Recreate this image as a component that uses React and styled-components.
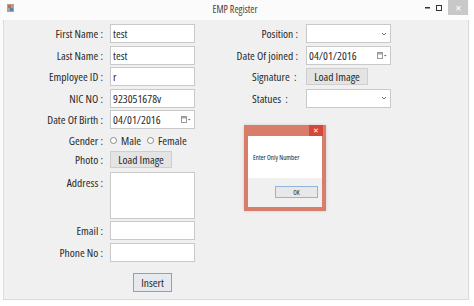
import styled, { createGlobalStyle } from 'styled-components';

const Global = createGlobalStyle`
  html, body { margin: 0; padding: 0; background: #ffffff; }
  body {
    font-family: "Open Sans", "Noto Sans", sans-serif;
    font-stretch: 85%;
  }
`;

const Window = styled.div`
  width: 470px;
  height: 301px;
  background: #fbfbfb;
  display: flex;
  flex-direction: column;
  box-sizing: border-box;
`;

const TitleBar = styled.div`
  height: 20px;
  display: flex;
  align-items: flex-start;
  position: relative;
`;

const AppIcon = styled.svg`
  margin: 4px 0 0 7px;
`;

const Title = styled.div`
  position: absolute;
  left: 0;
  right: 0;
  top: 2px;
  text-align: center;
  font-size: 10px;
  color: #444;
`;

const Controls = styled.div`
  margin-left: auto;
  display: flex;
  align-items: flex-start;
  height: 15px;
  margin-right: 2px;
`;

const Ctrl = styled.div`
  width: 11px;
  height: 15px;
  display: flex;
  align-items: center;
  justify-content: center;
`;

const Close = styled.div`
  width: 20px;
  height: 15px;
  background: #c8c8c8;
  color: #fff;
  font-size: 8px;
  display: flex;
  align-items: center;
  justify-content: center;
  margin-left: 4px;
`;

const Body = styled.div`
  flex: 1;
  margin: 0 1px 1px 3px;
  background: #f0f0f0;
  border: 1px solid #dcdcdc;
  border-top: none;
  position: relative;
  display: flex;
  box-sizing: border-box;
`;

const Form = styled.div`
  display: grid;
  grid-template-columns: ${p => p.$label}px ${p => p.$field}px;
  grid-template-rows: ${p => p.$rows};
  column-gap: ${p => p.$gap}px;
  row-gap: 2.5px;
  padding-top: 4px;
  margin-left: ${p => p.$offset || 0}px;
  align-content: start;
`;

const Label = styled.div`
  font-size: 11.5px;
  color: #2a2a2a;
  display: flex;
  align-items: ${p => (p.$top ? 'flex-start' : 'center')};
  justify-content: ${p => (p.$left ? 'flex-start' : 'flex-end')};
  padding-top: ${p => (p.$top ? 5 : 0)}px;
  padding-left: ${p => p.$indent || 0}px;
  white-space: pre;
`;

const Field = styled.div`
  display: flex;
  align-items: ${p => (p.$bottom ? 'flex-end' : 'center')};
`;

const Input = styled.div`
  box-sizing: border-box;
  width: 85px;
  height: ${p => p.$h || 19}px;
  background: #fff;
  border: 1px solid #c9c9c9;
  font-size: 11.5px;
  color: #2a2a2a;
  padding: 0 3px 0 2px;
  display: flex;
  align-items: ${p => (p.$multi ? 'flex-start' : 'center')};
  justify-content: space-between;
`;

const Button = styled.div`
  box-sizing: border-box;
  height: 17px;
  width: ${p => p.$w}px;
  background: #e4e4e4;
  border: 1px solid #cfcfcf;
  font-size: 11.5px;
  color: #2a2a2a;
  display: flex;
  align-items: center;
  justify-content: center;
`;

const InsertBtn = styled(Button)`
  height: 19px;
  border-color: #7fa6c9;
  background: #e6e9ee;
  margin: 11px 0 0 129px;
`;

const Radio = styled.span`
  display: inline-flex;
  align-items: center;
  font-size: 11.5px;
  color: #2a2a2a;
  margin-right: 6px;
  &::before {
    content: '';
    width: 5px;
    height: 5px;
    border: 1px solid #8a8a8a;
    border-radius: 50%;
    margin-right: 4px;
    background: #fff;
  }
`;

const LeftCol = styled.div`
  display: flex;
  flex-direction: column;
`;

const Dialog = styled.div`
  position: absolute;
  left: 240px;
  top: 105px;
  width: 82px;
  height: 86px;
  background: #d97d6b;
  box-sizing: border-box;
  padding: 0 4px 4px 4px;
  display: flex;
  flex-direction: column;
  box-shadow: 0 0 3px rgba(0,0,0,0.15);
`;

const DialogTitle = styled.div`
  height: 11px;
  display: flex;
  justify-content: flex-end;
`;

const DialogClose = styled.div`
  width: 14px;
  height: 11px;
  background: #d5473a;
  color: #fff;
  font-size: 7px;
  display: flex;
  align-items: center;
  justify-content: center;
  margin-right: -1px;
`;

const DialogBody = styled.div`
  height: 42px;
  background: #fff;
  font-size: 7px;
  color: #222;
  display: flex;
  align-items: center;
  padding-left: 5px;
`;

const DialogFoot = styled.div`
  flex: 1;
  background: #f0f0f0;
  display: flex;
  justify-content: flex-end;
  padding: 8px 4px 0 0;
`;

const OkBtn = styled.div`
  box-sizing: border-box;
  width: 43px;
  height: 12px;
  background: #e8e8e8;
  border: 1px solid #8fb5dc;
  font-size: 6.5px;
  color: #222;
  display: flex;
  align-items: center;
  justify-content: center;
`;

const DateIcon = () => (
  <svg width="10" height="7" viewBox="0 0 10 7">
    <rect x="0.5" y="0.5" width="5" height="6" fill="#fff" stroke="#999" />
    <rect x="1" y="1" width="4" height="1.5" fill="#aaa" />
    <path d="M7 3 L9.5 3 L8.25 4.5 Z" fill="#666" />
  </svg>
);

const Chevron = () => (
  <svg width="6" height="4" viewBox="0 0 6 4">
    <path d="M1 1 L3 3 L5 1" fill="none" stroke="#777" strokeWidth="1" />
  </svg>
);

const App = () => (
  <>
    <Global />
    <Window>
      <TitleBar>
        <AppIcon width="7" height="8" viewBox="0 0 7 8">
          <rect x="0" y="0" width="7" height="8" fill="#b0a090" />
          <rect x="1" y="1" width="3" height="3" fill="#d8663c" />
          <rect x="3" y="4" width="3" height="3" fill="#5a7fb0" />
        </AppIcon>
        <Title>EMP Register</Title>
        <Controls>
          <Ctrl>
            <svg width="5" height="2"><rect width="5" height="1.5" y="0" fill="#333" /></svg>
          </Ctrl>
          <Ctrl>
            <svg width="6" height="6"><rect x="0.5" y="0.5" width="5" height="5" fill="none" stroke="#333" /></svg>
          </Ctrl>
          <Close>✕</Close>
        </Controls>
      </TitleBar>
      <Body>
        <LeftCol>
          <Form $label={99} $field={85} $gap={7} $rows="19px 19px 19px 19px 19px 17px 16px 49px 19px 19px">
            <Label>First Name :</Label>
            <Field><Input>test</Input></Field>
            <Label>Last Name :</Label>
            <Field><Input>test</Input></Field>
            <Label>Employee ID :</Label>
            <Field><Input>r</Input></Field>
            <Label>NIC NO :</Label>
            <Field><Input>923051678v</Input></Field>
            <Label>Date Of Birth :</Label>
            <Field><Input>04/01/2016<DateIcon /></Input></Field>
            <Label>Gender :</Label>
            <Field><Radio>Male</Radio><Radio>Female</Radio></Field>
            <Label>Photo :</Label>
            <Field><Button $w={62}>Load Image</Button></Field>
            <Label $top>Address :</Label>
            <Field $bottom><Input $h={47} $multi /></Field>
            <Label>Email :</Label>
            <Field><Input /></Field>
            <Label>Phone No :</Label>
            <Field><Input /></Field>
          </Form>
          <InsertBtn $w={39}>Insert</InsertBtn>
        </LeftCol>
        <Form $label={99} $field={85} $gap={8} $offset={4} $rows="19px 19px 19px 19px">
          <Label>Position :</Label>
          <Field><Input><span /><Chevron /></Input></Field>
          <Label>Date Of joined :</Label>
          <Field><Input>04/01/2016<DateIcon /></Input></Field>
          <Label $left $indent={53}>{'Signature  :'}</Label>
          <Field><Button $w={62}>Load Image</Button></Field>
          <Label $left $indent={53}>{'Statues  :'}</Label>
          <Field><Input><span /><Chevron /></Input></Field>
        </Form>
        <Dialog>
          <DialogTitle><DialogClose>✕</DialogClose></DialogTitle>
          <DialogBody>Enter Only Number</DialogBody>
          <DialogFoot><OkBtn>OK</OkBtn></DialogFoot>
        </Dialog>
      </Body>
    </Window>
  </>
);

export default App;
